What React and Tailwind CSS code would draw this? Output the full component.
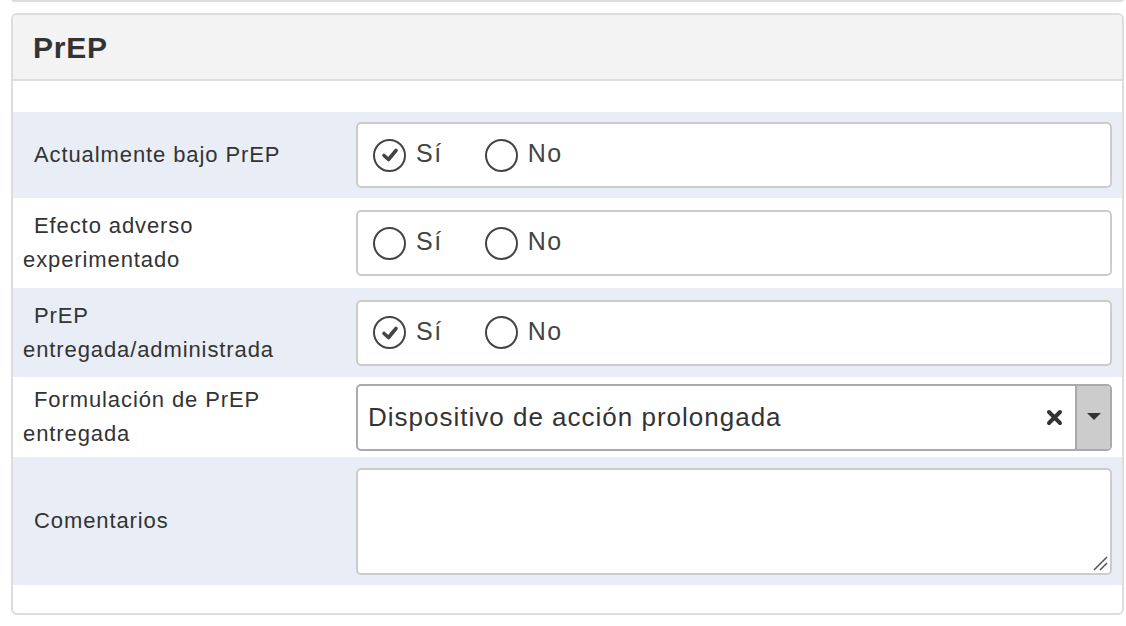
import React from 'react';

const Radio = ({ checked, label }) => (
  <label className="flex items-center gap-[10px]">
    <span className="w-[33px] h-[33px] rounded-full border-[2px] border-[#444] flex items-center justify-center">
      {checked && (
        <svg width="20" height="20" viewBox="0 0 20 20">
          <path d="M4 10.5 L8.5 14.5 L16 5.5" fill="none" stroke="#444" strokeWidth="3.6" strokeLinecap="round" strokeLinejoin="round" />
        </svg>
      )}
    </span>
    <span className="text-[25px] tracking-[1.5px] text-[#444] leading-none -mt-[3px]">{label}</span>
  </label>
);

const YesNo = ({ value }) => (
  <div className="h-[66px] rounded-[5px] border-2 border-[#ccc] bg-white flex items-center pl-[15px] gap-[42px]">
    <Radio checked={value === 'si'} label="Sí" />
    <Radio checked={value === 'no'} label="No" />
  </div>
);

const Row = ({ label, shaded, h, children }) => (
  <div className={`flex items-center ${h} ${shaded ? 'bg-[#e9eef6]' : 'bg-white'}`}>
    <div className="w-[343px] shrink-0 pl-[10px] pr-[33px] text-[22px] tracking-[0.9px] leading-[34px] text-[#333] indent-[11px]">
      {label}
    </div>
    <div className="flex-1 pr-[10px]">{children}</div>
  </div>
);

export default function App() {
  return (
    <div className="w-[1126px] h-[626px] bg-white overflow-hidden" style={{ fontFamily: '"Liberation Sans", Arial, sans-serif' }}>
      {/* previous card bottom */}
      <div className="ml-[11px] mr-[2px] h-[3px] -mt-[1px] border-2 border-t-0 border-[#ddd] rounded-b-[5px]" />

      <div className="ml-[11px] mr-[2px] mt-[11px] border-2 border-[#ddd] rounded-[6px] overflow-hidden">
        <div className="h-[66px] bg-[#f3f3f3] border-b-2 border-[#ddd] flex items-center px-[20px]">
          <h2 className="text-[30px] font-bold tracking-[0.8px] text-[#333]">PrEP</h2>
        </div>

        <div className="pt-[31px] pb-[28px]">
          <Row label="Actualmente bajo PrEP" shaded h="h-[86px]">
            <YesNo value="si" />
          </Row>
          <Row label="Efecto adverso experimentado" h="h-[90px]">
            <YesNo value="" />
          </Row>
          <Row label="PrEP entregada/administrada" shaded h="h-[89px]">
            <YesNo value="si" />
          </Row>
          <Row label="Formulación de PrEP entregada" h="h-[80px]">
            <div className="h-[67px] rounded-[5px] border-2 border-[#aaa] bg-white flex items-stretch overflow-hidden">
              <div className="flex-1 flex items-center pl-[10px] text-[26px] tracking-[1px] text-[#333]">
                Dispositivo de acción prolongada
              </div>
              <div className="flex items-center pr-[12px]">
                <svg width="17" height="17" viewBox="0 0 17 17">
                  <path d="M3 3 L14 14 M14 3 L3 14" stroke="#333" strokeWidth="4" strokeLinecap="round" />
                </svg>
              </div>
              <div className="w-[35px] bg-[#ccc] border-l-2 border-[#aaa] flex items-center justify-center">
                <svg width="14" height="8" viewBox="0 0 14 8">
                  <path d="M0 0 L14 0 L7 7 Z" fill="#333" />
                </svg>
              </div>
            </div>
          </Row>
          <Row label="Comentarios" shaded h="h-[128px]">
            <div className="relative h-[107px] rounded-[5px] border-2 border-[#ccc] bg-white">
              <svg className="absolute right-[2px] bottom-[2px]" width="16" height="16" viewBox="0 0 16 16">
                <path d="M2 15 L15 2 M8 15 L15 8" stroke="#555" strokeWidth="1.5" />
              </svg>
            </div>
          </Row>
        </div>
      </div>
    </div>
  );
}
